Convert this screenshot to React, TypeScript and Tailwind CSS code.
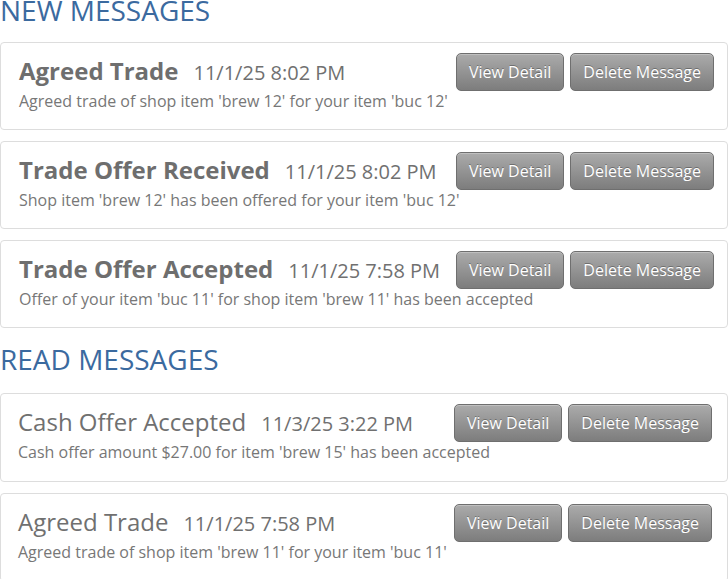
import React from "react";

type Message = {
  title: string;
  date: string;
  body: string;
};

const newMessages: Message[] = [
  {
    title: "Agreed Trade",
    date: "11/1/25 8:02 PM",
    body: "Agreed trade of shop item 'brew 12' for your item 'buc 12'",
  },
  {
    title: "Trade Offer Received",
    date: "11/1/25 8:02 PM",
    body: "Shop item 'brew 12' has been offered for your item 'buc 12'",
  },
  {
    title: "Trade Offer Accepted",
    date: "11/1/25 7:58 PM",
    body: "Offer of your item 'buc 11' for shop item 'brew 11' has been accepted",
  },
];

const readMessages: Message[] = [
  {
    title: "Cash Offer Accepted",
    date: "11/3/25 3:22 PM",
    body: "Cash offer amount $27.00 for item 'brew 15' has been accepted",
  },
  {
    title: "Agreed Trade",
    date: "11/1/25 7:58 PM",
    body: "Agreed trade of shop item 'brew 11' for your item 'buc 11'",
  },
];

const GrayButton = ({ label }: { label: string }) => (
  <button className="h-[38px] px-[12px] rounded-[5px] border border-[#6f6f6f] bg-gradient-to-b from-[#ababab] to-[#7d7d7d] text-white text-[16px] leading-none [text-shadow:0_-1px_0_rgba(0,0,0,0.3)] shadow-[inset_0_1px_0_rgba(255,255,255,0.25)] cursor-pointer">
    {label}
  </button>
);

const MessageCard = ({ msg, unread }: { msg: Message; unread: boolean }) => (
  <div
    className={
      unread
        ? "border border-[#dddddd] rounded-[4px] bg-white pl-[18px] pr-[13px] pt-[10px] pb-[17px] mb-[11px]"
        : "border border-[#dddddd] rounded-[4px] bg-white pl-[17px] pr-[15px] pt-[10px] pb-[18px] mb-[11px]"
    }
  >
    <div className="flex justify-between items-start h-[38px]">
      <div className="flex items-baseline mt-[2px] whitespace-nowrap">
        <span
          className={
            unread
              ? "text-[24px] leading-[32px] font-bold text-[#6e6e6e]"
              : "text-[24px] leading-[32px] font-normal text-[#707070]"
          }
        >
          {msg.title}
        </span>
        <span className="ml-[15px] text-[20px] leading-[32px] text-[#707070]">
          {msg.date}
        </span>
      </div>
      <div className="flex gap-[6px] shrink-0">
        <GrayButton label="View Detail" />
        <GrayButton label="Delete Message" />
      </div>
    </div>
    <div className="-mt-[1px] text-[16px] leading-[22px] text-[#777777] whitespace-nowrap">
      {msg.body}
    </div>
  </div>
);

export default function App() {
  return (
    <div className="w-[728px] h-[579px] overflow-hidden bg-white font-['Open_Sans',sans-serif]">
      <div className="-mt-[5px]">
        <h2 className="text-[28px] leading-[30px] font-normal text-[#3b6a9f] mb-[17px]">
          NEW MESSAGES
        </h2>
        {newMessages.map((m) => (
          <MessageCard key={m.title + m.date} msg={m} unread />
        ))}
        <h2 className="mt-[16px] text-[28px] leading-[30px] font-normal text-[#3b6a9f] mb-[19px]">
          READ MESSAGES
        </h2>
        {readMessages.map((m) => (
          <MessageCard key={m.title + m.date} msg={m} unread={false} />
        ))}
      </div>
    </div>
  );
}
